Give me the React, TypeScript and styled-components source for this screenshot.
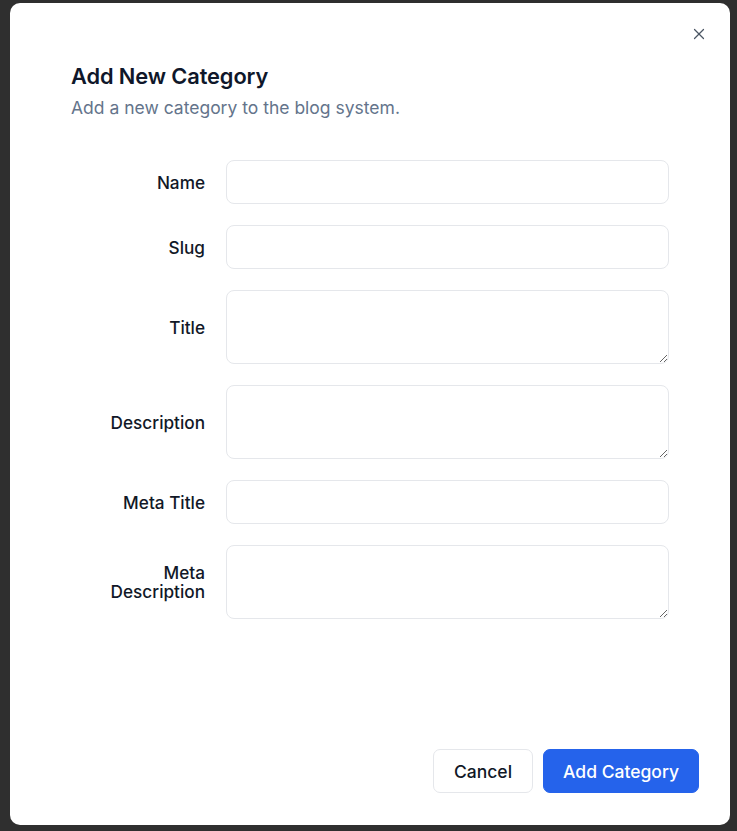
import React from "react";
import styled, { createGlobalStyle } from "styled-components";
import { X } from "lucide-react";

const Global = createGlobalStyle`
  html, body { margin: 0; padding: 0; background: #2f2f2f; }
  body { font-family: Inter, "Noto Sans", Arial, sans-serif; }
  * { box-sizing: border-box; }
`;

const Page = styled.div`
  width: 737px;
  height: 831px;
  padding: 3px 7px 6px 10px;
  background: #2f2f2f;
`;

const Dialog = styled.div`
  position: relative;
  width: 720px;
  height: 822px;
  background: #ffffff;
  border-radius: 10px;
  padding: 59px 31px 32px 61px;
  display: flex;
  flex-direction: column;
`;

const Close = styled.button`
  position: absolute;
  top: 22px;
  right: 22px;
  width: 18px;
  height: 18px;
  padding: 0;
  border: none;
  background: transparent;
  color: #4b5563;
  display: flex;
  align-items: center;
  justify-content: center;
  cursor: pointer;
`;

const Header = styled.div`
  display: flex;
  flex-direction: column;
  gap: 6px;
`;

const Title = styled.h2`
  margin: 0;
  font-size: 21.8px;
  line-height: 28px;
  font-weight: 600;
  color: #0f172a;
  letter-spacing: -0.1px;
`;

const Subtitle = styled.p`
  margin: 0;
  font-size: 17.5px;
  line-height: 24px;
  color: #64748b;
`;

const Form = styled.div`
  margin-top: 40px;
  display: grid;
  grid-template-columns: 134px 443px;
  column-gap: 21px;
  row-gap: 21px;
  align-items: center;
`;

const Label = styled.label`
  text-align: right;
  font-size: 17.2px;
  line-height: 19px;
  font-weight: 500;
  color: #111827;
`;

const Input = styled.input`
  height: 44px;
  width: 100%;
  border: 1px solid #e5e7eb;
  border-radius: 8px;
  background: #fff;
  padding: 0 12px;
  font: inherit;
  outline: none;
`;

const TextArea = styled.textarea`
  height: 74px;
  width: 100%;
  border: 1px solid #e5e7eb;
  border-radius: 8px;
  background: #fff;
  padding: 8px 12px;
  font: inherit;
  outline: none;
  display: block;
`;

const Footer = styled.div`
  margin-top: auto;
  display: flex;
  justify-content: flex-end;
  gap: 10px;
`;

const Button = styled.button<{ $primary?: boolean }>`
  height: 44px;
  padding: 0 ${(p) => (p.$primary ? "19px" : "20px")};
  border-radius: 7px;
  font-family: inherit;
  font-size: 17.5px;
  font-weight: 500;
  cursor: pointer;
  border: 1px solid ${(p) => (p.$primary ? "#2563eb" : "#e5e7eb")};
  background: ${(p) => (p.$primary ? "#2563eb" : "#ffffff")};
  color: ${(p) => (p.$primary ? "#ffffff" : "#111827")};
`;

const fields: { label: React.ReactNode; area?: boolean }[] = [
  { label: "Name" },
  { label: "Slug" },
  { label: "Title", area: true },
  { label: "Description", area: true },
  { label: "Meta Title" },
  { label: <>Meta<br />Description</>, area: true },
];

export default function App() {
  return (
    <>
      <Global />
      <Page>
        <Dialog>
          <Close aria-label="Close">
            <X size={18} strokeWidth={1.6} />
          </Close>
          <Header>
            <Title>Add New Category</Title>
            <Subtitle>Add a new category to the blog system.</Subtitle>
          </Header>
          <Form>
            {fields.map((f, i) => (
              <React.Fragment key={i}>
                <Label>{f.label}</Label>
                {f.area ? <TextArea /> : <Input />}
              </React.Fragment>
            ))}
          </Form>
          <Footer>
            <Button>Cancel</Button>
            <Button $primary>Add Category</Button>
          </Footer>
        </Dialog>
      </Page>
    </>
  );
}
